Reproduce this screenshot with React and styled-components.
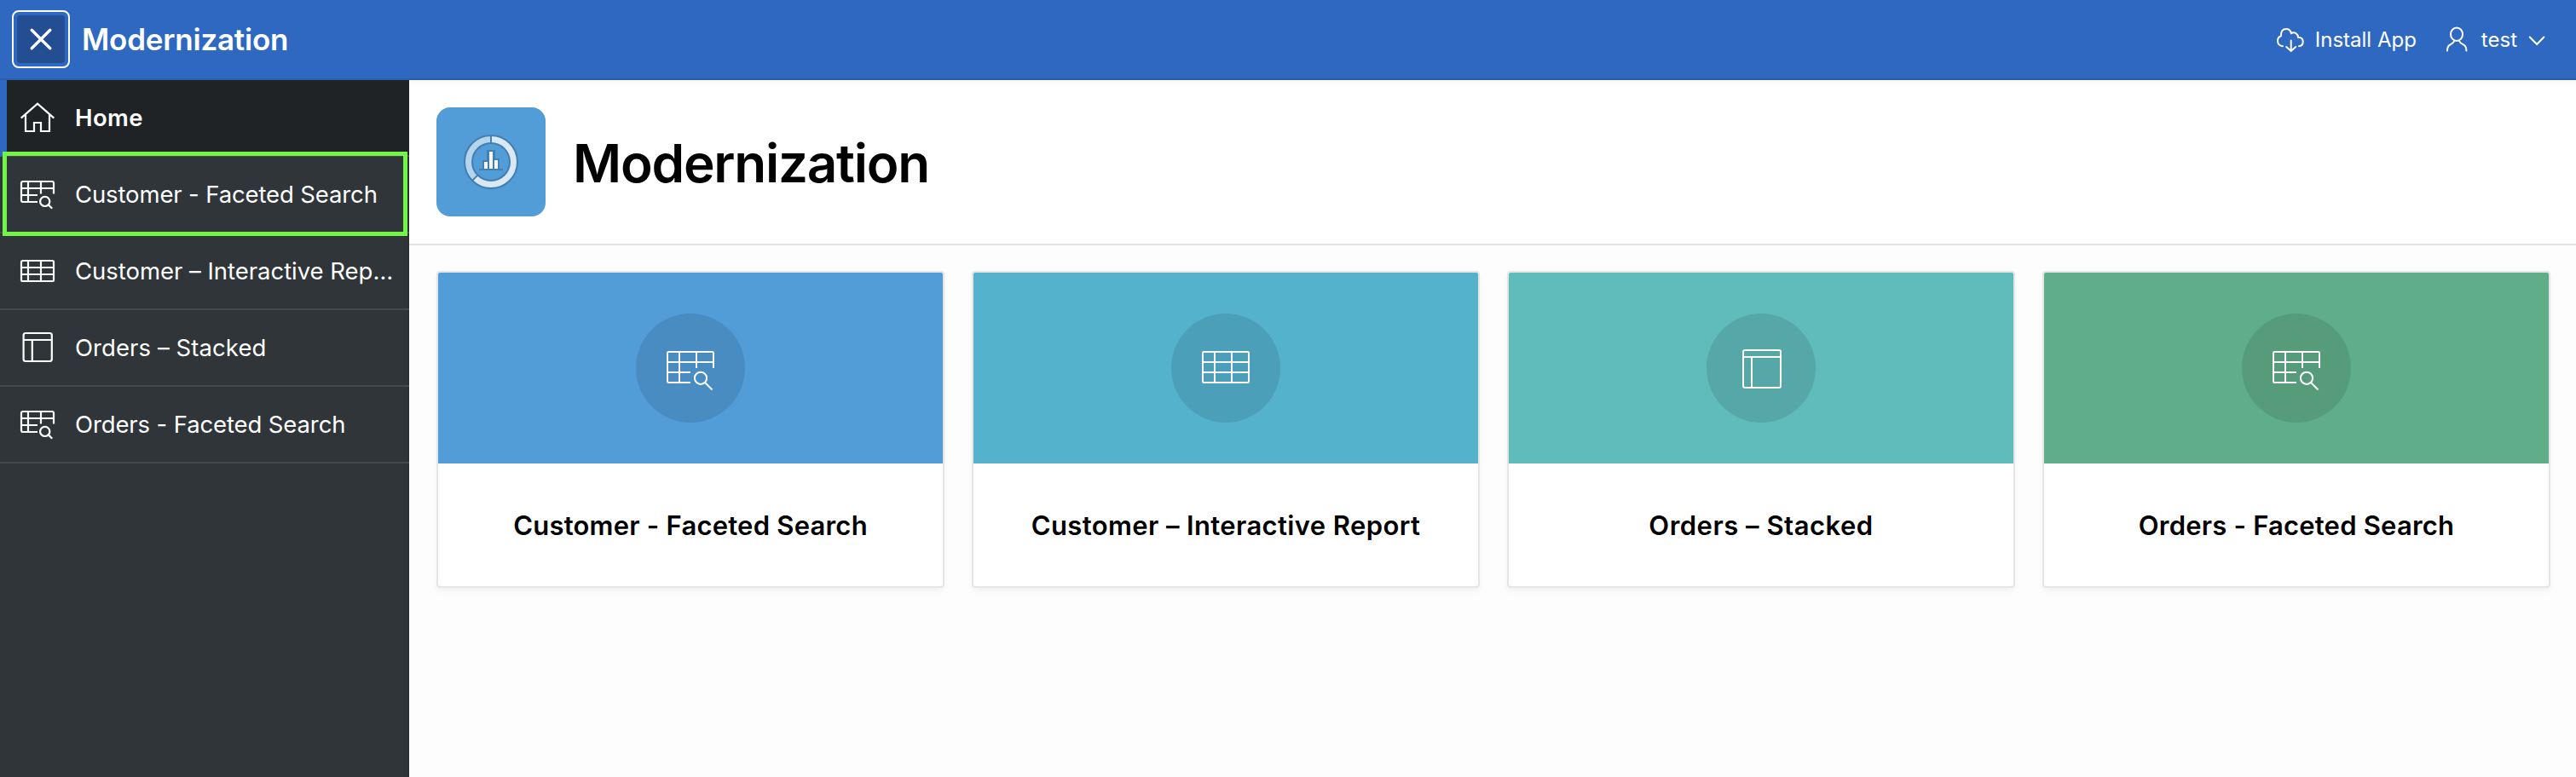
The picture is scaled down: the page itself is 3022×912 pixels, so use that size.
import React from 'react';
import styled, { createGlobalStyle } from 'styled-components';

const GlobalStyle = createGlobalStyle`
  *, *::before, *::after { box-sizing: border-box; }
  body {
    margin: 0;
    background: #fdfdfd;
    color: #000;
    font-family: Inter, "Liberation Sans", sans-serif;
    -webkit-font-smoothing: antialiased;
  }
`;

const Page = styled.div`
  display: flex;
  flex-direction: column;
  height: 912px;
  overflow: hidden;
`;

const Header = styled.header`
  flex: none;
  display: flex;
  align-items: center;
  justify-content: space-between;
  height: 94px;
  padding: 0 36px 0 14px;
  background: #2e68c1;
  border-bottom: 2px solid #2a5dad;
  color: #fff;
`;

const Brand = styled.div`
  display: flex;
  align-items: center;
  gap: 14px;
`;

const BrandName = styled.span`
  font-size: 35px;
  font-weight: 600;
  letter-spacing: -0.22px;
  line-height: 44px;
`;

const MenuButton = styled.button`
  display: block;
  width: 68px;
  height: 68px;
  padding: 4px;
  border: 2px solid #fff;
  border-radius: 8px;
  background: transparent;
  color: #fff;
`;

const MenuFace = styled.span`
  display: flex;
  align-items: center;
  justify-content: center;
  width: 56px;
  height: 56px;
  border-radius: 4px;
  background: #234e91;
`;

const Actions = styled.nav`
  display: flex;
  align-items: center;
  gap: 31px;
  padding-top: 2px;
`;

const Action = styled.a`
  display: flex;
  align-items: center;
  gap: 13px;
  font-size: 24px;
  line-height: 32px;
  color: #fff;
`;

const Line = styled.svg`
  display: block;
  flex: none;
  fill: none;
  stroke: currentColor;
  stroke-width: ${(p) => p.$weight || 2};
`;

const Body = styled.div`
  flex: 1;
  display: flex;
  min-height: 0;
`;

const Sidebar = styled.aside`
  flex: none;
  width: 480px;
  background: #2f3538;
  color: #fff;
  border-right: 2px solid #2a2f31;
`;

const NavItem = styled.a`
  position: relative;
  display: flex;
  align-items: center;
  gap: 20px;
  width: 480px;
  height: 90px;
  padding: 0 12px 0 ${(p) => (p.$active ? 12 : 20)}px;
  border-bottom: 2px solid #44494c;
  border-left: ${(p) => (p.$active ? '8px solid #2e68c1' : '0')};
  background: ${(p) => (p.$active ? '#1f2325' : 'transparent')};
  font-size: 27.5px;
  font-weight: ${(p) => (p.$active ? 600 : 400)};
  letter-spacing: ${(p) => p.$tracking}px;
  line-height: 40px;
`;

const NavLabel = styled.span`
  white-space: nowrap;
`;

const Highlight = styled.span`
  position: absolute;
  z-index: 2;
  top: -6px;
  left: 3px;
  width: 475px;
  height: 99px;
  border: 5px solid #72f548;
`;

const Main = styled.main`
  flex: 1;
  min-width: 0;
`;

const Hero = styled.section`
  display: flex;
  align-items: center;
  gap: 32px;
  height: 194px;
  padding: 0 32px;
  background: linear-gradient(#f9f9f9, #fff 8px);
  border-bottom: 2px solid #e2e2e2;
`;

const AppIcon = styled.div`
  display: flex;
  align-items: center;
  justify-content: center;
  width: 128px;
  height: 128px;
  border-radius: 16px;
  background: #529cd7;
`;

const Title = styled.h1`
  margin: 0;
  padding-top: 3px;
  font-size: 62px;
  font-weight: 600;
  letter-spacing: -1.25px;
  line-height: 76px;
`;

const Cards = styled.section`
  display: grid;
  grid-template-columns: repeat(4, 596px);
  gap: 32px;
  padding: 30px 30px 30px 32px;
`;

const Card = styled.article`
  height: 372px;
  border: 2px solid #e5e5e5;
  border-radius: 4px;
  background: #fff;
  box-shadow: 0 4px 8px -2px rgba(0, 0, 0, 0.07);
  overflow: hidden;
`;

const CardBanner = styled.div`
  display: flex;
  align-items: center;
  justify-content: center;
  height: 224px;
  background: ${(p) => p.$color};
`;

const CardCircle = styled.span`
  display: flex;
  align-items: center;
  justify-content: center;
  width: 128px;
  height: 128px;
  border-radius: 50%;
  background: rgba(0, 0, 0, 0.1);
  color: #fff;
`;

const CardTitle = styled.h2`
  display: flex;
  align-items: center;
  justify-content: center;
  height: 144px;
  margin: 0;
  padding-top: 2px;
  font-size: 31px;
  font-weight: 600;
  letter-spacing: ${(p) => p.$tracking}px;
  line-height: 40px;
`;

const navIcons = {
  home: (
    <>
      <path d="M4.7 24.6 24 7.6l19.3 17" />
      <path d="M10 20.5V40h10V30h8v10h10V20.5" />
    </>
  ),
  tableSearch: (
    <>
      <path d="M24 33H7q-2 0-2-2V11q0-2 2-2h34q2 0 2 2v12.5M5 17h38M5 25h19M13 9v24M28 9v14.5" />
      <circle cx="32.7" cy="32.4" r="5.6" />
      <path d="m36.8 36.4 4.4 4.4" />
    </>
  ),
  table: (
    <>
      <rect x="5" y="12" width="38" height="24" rx="1.6" />
      <path d="M5 20h38M5 28h38M13 12v24M28 12v24" />
    </>
  ),
  layout: (
    <>
      <rect x="7.6" y="7" width="33.2" height="33" rx="2.4" />
      <path d="M7.6 15h33.2M17.8 15v25" />
    </>
  ),
};

const cardIcons = {
  tableSearch: (
    <>
      <path d="M32 49H6.2q-1.2 0-1.2-1.2V14.2Q5 13 6.2 13h51.6q1.2 0 1.2 1.2V32M5 25h54M5 37h27M19 13v36M39 13v19" />
      <circle cx="44" cy="43.8" r="7.1" />
      <path d="m49 49 8.5 8.5" />
    </>
  ),
  table: (
    <>
      <rect x="5" y="13" width="54" height="36" rx="1.2" />
      <path d="M5 25h54M5 37h54M19 13v36M39 13v36" />
    </>
  ),
  layout: (
    <>
      <rect x="11" y="11" width="44" height="44" rx="2" />
      <path d="M11 19h44M21 19v36" />
    </>
  ),
};

const navItems = [
  { icon: 'home', label: 'Home', tracking: 0.43, active: true },
  { icon: 'tableSearch', label: 'Customer - Faceted Search', tracking: -0.13, marked: true },
  { icon: 'table', label: 'Customer – Interactive Rep…', tracking: -0.03 },
  { icon: 'layout', label: 'Orders – Stacked', tracking: 0.08 },
  { icon: 'tableSearch', label: 'Orders - Faceted Search', tracking: -0.12 },
];

const cards = [
  { icon: 'tableSearch', label: 'Customer - Faceted Search', color: '#529cd7', tracking: 0.22 },
  { icon: 'table', label: 'Customer – Interactive Report', color: '#54b2cd', tracking: 0.38 },
  { icon: 'layout', label: 'Orders – Stacked', color: '#60bbbb', tracking: 0.5 },
  { icon: 'tableSearch', label: 'Orders - Faceted Search', color: '#60ae89', tracking: 0.2 },
];

function DashboardLogo() {
  return (
    <svg width="80" height="80" viewBox="0 0 80 80" fill="none">
      <circle cx="40" cy="40" r="26.5" stroke="#d9e8f4" strokeWidth="9" />
      <path d="M40 13.5A26.5 26.5 0 0 0 21.3 58.7" stroke="#b5d5ec" strokeWidth="9" />
      <circle cx="40" cy="40" r="31" stroke="#437fb0" strokeWidth="2" />
      <circle cx="40" cy="40" r="22" stroke="#437fb0" strokeWidth="2" />
      <path d="M40 9v9M24.4 55.6l-6.3 6.3" stroke="#437fb0" strokeWidth="2" />
      <path d="M31 49V39h5V27h8v10h5v12" fill="#437fb0" stroke="#437fb0" strokeWidth="2" />
      <path d="M32 40h4v8h-4zM38 28h4v20h-4zM44 38h4v10h-4z" fill="#f2f7fb" />
      <path d="M26 49h28" stroke="#437fb0" strokeWidth="2" />
    </svg>
  );
}

export default function App() {
  return (
    <>
      <GlobalStyle />
      <Page>
        <Header>
          <Brand>
            <MenuButton aria-label="Close navigation">
              <MenuFace>
                <Line width="32" height="32" viewBox="0 0 32 32" $weight={3.4}>
                  <path d="m5.2 5.2 21.6 21.6M26.8 5.2 5.2 26.8" strokeLinecap="round" />
                </Line>
              </MenuFace>
            </MenuButton>
            <BrandName>Modernization</BrandName>
          </Brand>
          <Actions>
            <Action>
              <Line width="32" height="32" viewBox="0 0 32 32" strokeLinecap="round">
                <path d="M7 23.2C3.5 23 1 20.3 1 17C1 13.8 2.5 12.2 4.8 11.3C4.8 6.3 7 3 11 3C14 3 16.2 5 16.9 8C21 6 24.8 8.5 25 12.8C28.5 12.9 30.7 15 30.7 18C30.7 21 28.8 23 26 23.2" />
                <path d="M16.7 16.5V28.8M11.2 24l5.5 5 5.5-5" />
              </Line>
              Install App
            </Action>
            <Action>
              <Line width="32" height="32" viewBox="0 0 32 32" strokeLinecap="round">
                <ellipse cx="16" cy="9.2" rx="7" ry="7.7" />
                <path d="M5 28.6C5 19.5 11 22.5 13.2 17M27.4 28.6C27.4 19.5 21.2 22.5 19 17" />
              </Line>
              test
              <Line width="20" height="32" viewBox="0 0 20 32" strokeLinecap="round">
                <path d="m1.8 12.5 8.3 8.5 8.3-8.5" />
              </Line>
            </Action>
          </Actions>
        </Header>
        <Body>
          <Sidebar>
            {navItems.map((item) => (
              <NavItem key={item.label} $active={item.active} $tracking={item.tracking}>
                <Line width="48" height="48" viewBox="0 0 48 48" $weight={2.2}>{navIcons[item.icon]}</Line>
                <NavLabel>{item.label}</NavLabel>
                {item.marked && <Highlight />}
              </NavItem>
            ))}
          </Sidebar>
          <Main>
            <Hero>
              <AppIcon><DashboardLogo /></AppIcon>
              <Title>Modernization</Title>
            </Hero>
            <Cards>
              {cards.map((card) => (
                <Card key={card.label}>
                  <CardBanner $color={card.color}>
                    <CardCircle>
                      <Line width="64" height="64" viewBox="0 0 64 64">{cardIcons[card.icon]}</Line>
                    </CardCircle>
                  </CardBanner>
                  <CardTitle $tracking={card.tracking}>{card.label}</CardTitle>
                </Card>
              ))}
            </Cards>
          </Main>
        </Body>
      </Page>
    </>
  );
}
